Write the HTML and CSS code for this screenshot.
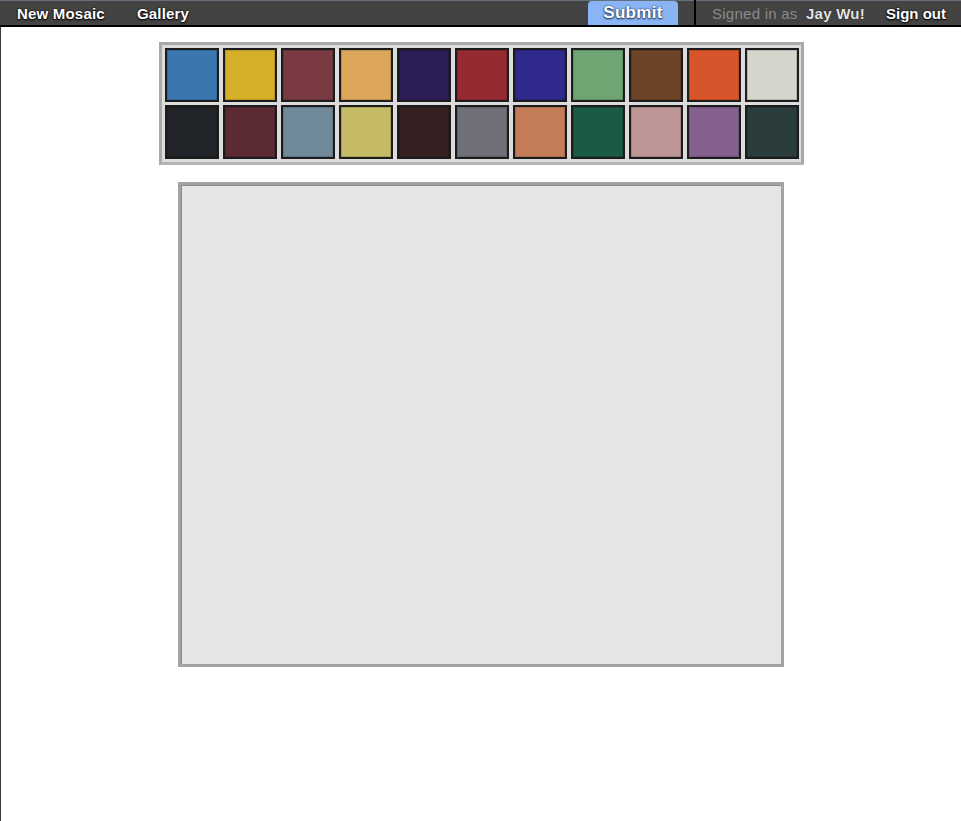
FILE: index.html
```html
<!DOCTYPE html>
<html>
<head>
<meta charset="utf-8">
<title>Mosaic</title>
<link rel="stylesheet" href="styles.css">
</head>
<body>
<div class="page">
  <nav class="navbar">
    <div class="nav-left">
      <a class="nav-link" href="#">New Mosaic</a>
      <a class="nav-link" href="#">Gallery</a>
    </div>
    <div class="nav-right">
      <a class="submit-btn" href="#">Submit</a>
      <span class="divider"></span>
      <span class="user">Signed in as <b>Jay Wu!</b></span>
      <a class="nav-link signout" href="#">Sign out</a>
    </div>
  </nav>
  <main class="main">
    <div class="palette">
      <div class="swatch c1"></div>
      <div class="swatch c2"></div>
      <div class="swatch c3"></div>
      <div class="swatch c4"></div>
      <div class="swatch c5"></div>
      <div class="swatch c6"></div>
      <div class="swatch c7"></div>
      <div class="swatch c8"></div>
      <div class="swatch c9"></div>
      <div class="swatch c10"></div>
      <div class="swatch c11"></div>
      <div class="swatch c12"></div>
      <div class="swatch c13"></div>
      <div class="swatch c14"></div>
      <div class="swatch c15"></div>
      <div class="swatch c16"></div>
      <div class="swatch c17"></div>
      <div class="swatch c18"></div>
      <div class="swatch c19"></div>
      <div class="swatch c20"></div>
      <div class="swatch c21"></div>
      <div class="swatch c22"></div>
    </div>
    <div class="canvas"></div>
  </main>
</div>
</body>
</html>
```

FILE: styles.css
```css
html, body {
  margin: 0;
  padding: 0;
  background: #ffffff;
}
body {
  font-family: "Liberation Sans", Arial, Helvetica, sans-serif;
}
.page {
  min-height: 821px;
  border-left: 1px solid #3a3a3a;
  box-sizing: border-box;
}
.navbar {
  display: flex;
  align-items: stretch;
  height: 24px;
  background: #434343;
  border-top: 1px solid #66707c;
  border-bottom: 2px solid #000000;
  margin-left: -1px;
}
.nav-left {
  display: flex;
  align-items: center;
}
.nav-link {
  color: #ffffff;
  font-weight: bold;
  font-size: 15px;
  text-decoration: none;
  padding: 0 16px;
  letter-spacing: 0.2px;
  text-shadow: 0 0 2px #000000, 0 1px 2px #000000;
}
.nav-left .nav-link:first-child {
  padding-left: 17px;
}
.nav-right {
  margin-left: auto;
  display: flex;
  align-items: stretch;
}
.submit-btn {
  display: flex;
  align-items: center;
  width: 90px;
  justify-content: center;
  background: #8ab5f5;
  border-radius: 4px 4px 0 0;
  color: #ffffff;
  font-weight: bold;
  font-size: 17px;
  text-decoration: none;
  letter-spacing: 0.3px;
  text-shadow: 0 0 2px #1a2a50, 0 1px 2px #1a2a50;
  margin-right: 16px;
}
.divider {
  width: 2px;
  background: #000000;
  margin-top: -1px;
}
.user {
  display: flex;
  align-items: center;
  color: #8a8a8a;
  font-size: 15px;
  padding-left: 16px;
  letter-spacing: 0.25px;
  white-space: pre;
}
.user b {
  color: #e4e4e4;
  font-weight: bold;
  margin-left: 4px;
  text-shadow: 0 0 1px #000000;
}
.nav-link.signout {
  display: flex;
  align-items: center;
  letter-spacing: 0;
  padding: 0 15px 0 21px;
}
.main {
  display: flex;
  flex-direction: column;
  align-items: center;
  padding-top: 15px;
}
.palette {
  display: grid;
  grid-template-columns: repeat(11, 54px);
  grid-auto-rows: 54px;
  column-gap: 4px;
  row-gap: 3px;
  padding: 3px 2px 3px 3px;
  background: #dcdcdc;
  border: 3px solid #a9a9a9;
  border-bottom-color: #b4b4b4;
}
.swatch {
  box-sizing: border-box;
  border: 2px solid #1c1c1c;
  box-shadow: inset 0 0 0 1px rgba(0, 0, 0, 0.15);
}
.c1 { background: #3a77b0; }
.c2 { background: #d6b028; }
.c3 { background: #7a3a42; }
.c4 { background: #dba55a; }
.c5 { background: #2c1d55; }
.c6 { background: #962a32; }
.c7 { background: #30298c; }
.c8 { background: #6fa473; }
.c9 { background: #6e4429; }
.c10 { background: #d8542a; }
.c11 { background: #d4d6cc; }
.c12 { background: #212529; }
.c13 { background: #5c2a33; }
.c14 { background: #718a9b; }
.c15 { background: #c5bb64; }
.c16 { background: #352122; }
.c17 { background: #707078; }
.c18 { background: #c47d58; }
.c19 { background: #1b5a46; }
.c20 { background: #bf9696; }
.c21 { background: #84608e; }
.c22 { background: #2a3c3c; }
.canvas {
  margin-top: 17px;
  width: 600px;
  height: 479px;
  background: #e6e6e6;
  border: 3px solid #a3a3a3;
  box-shadow: inset 1px 1px 0 #8a8a8a;
}
```
